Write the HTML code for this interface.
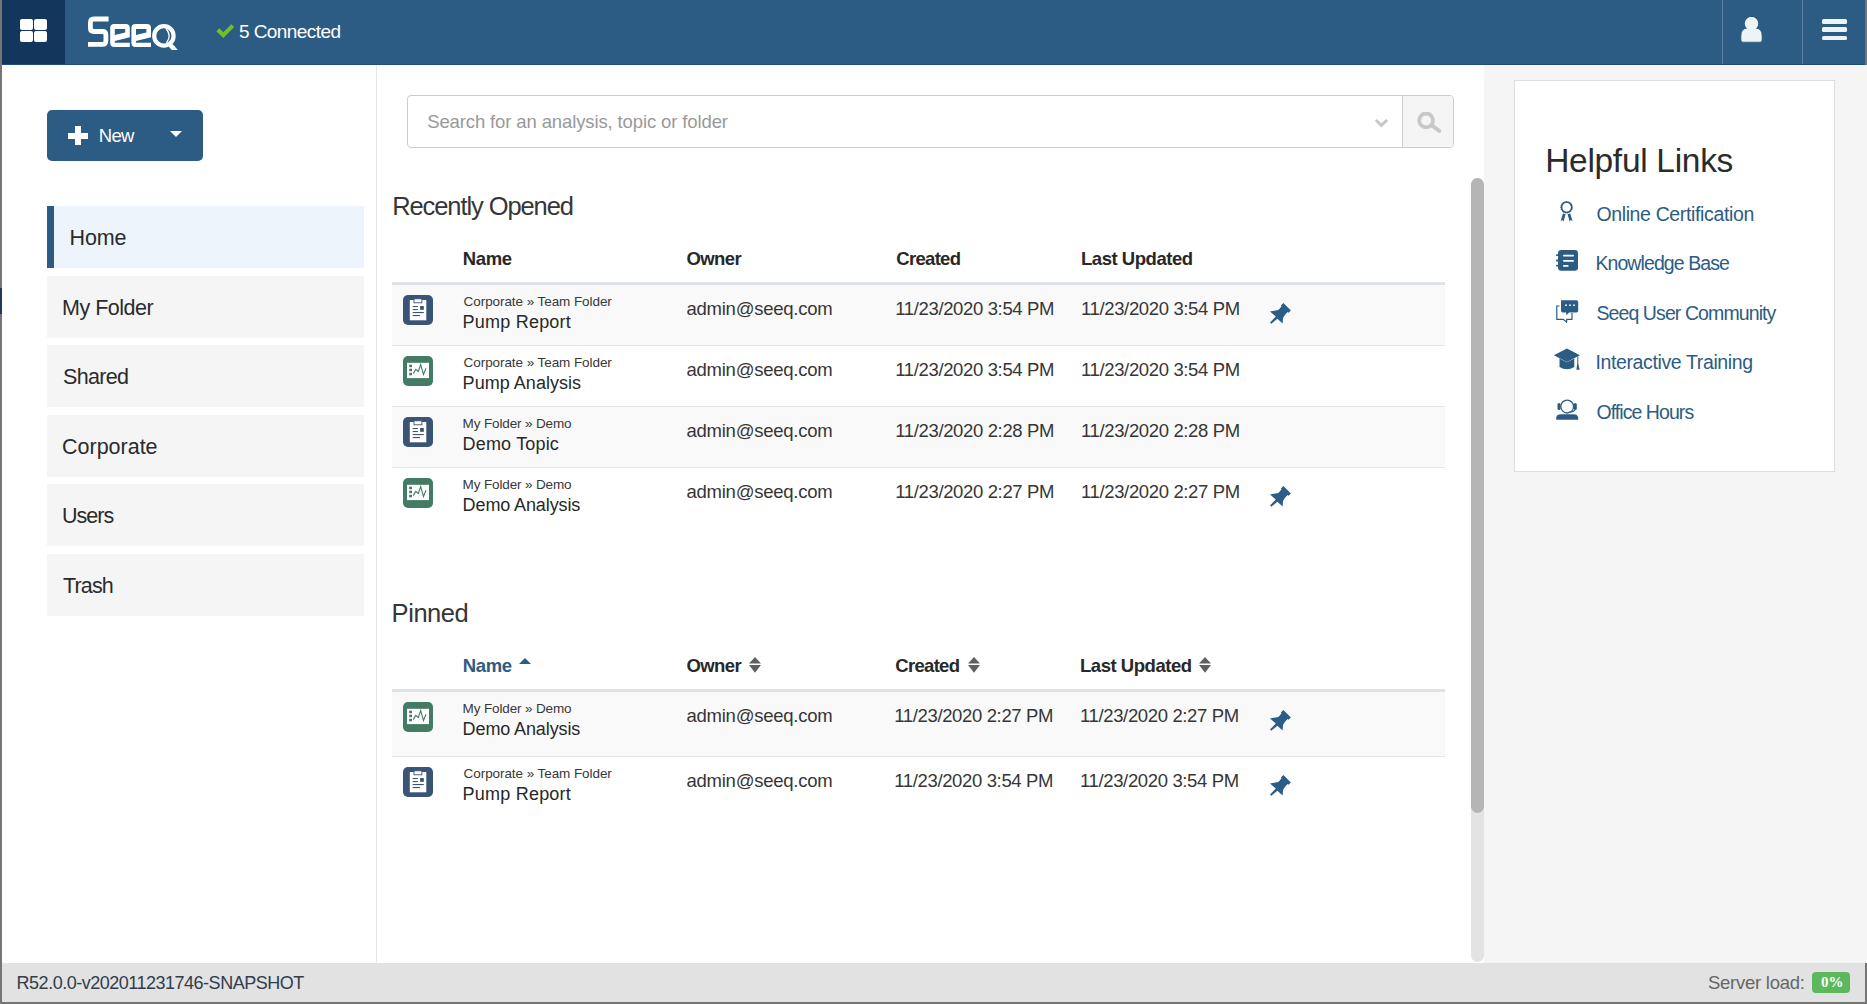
<!DOCTYPE html>
<html><head><meta charset="utf-8"><title>Seeq</title>
<style>
html,body{margin:0;padding:0;}
body{width:1867px;height:1004px;position:relative;overflow:hidden;background:#767676;font-family:"Liberation Sans",sans-serif;}
.t{position:absolute;white-space:nowrap;line-height:1;}
</style></head><body>
<div style="position:absolute;left:2px;top:0;width:1863px;height:64px;background:#2c5c84;border-bottom:1px solid #1f4e78"></div>
<div style="position:absolute;left:2px;top:0;width:63px;height:64px;background:#13375c"></div>
<div style="position:absolute;left:20px;top:19px;width:13px;height:11px;background:#fff;border-radius:2px"></div>
<div style="position:absolute;left:34px;top:19px;width:13px;height:11px;background:#fff;border-radius:2px"></div>
<div style="position:absolute;left:20px;top:31px;width:13px;height:11px;background:#fff;border-radius:2px"></div>
<div style="position:absolute;left:34px;top:31px;width:13px;height:11px;background:#fff;border-radius:2px"></div>
<svg style="position:absolute;left:84px;top:12px" width="100" height="42" viewBox="0 0 100 42">
<path d="M24.6 7 H10 Q6.4 7 6.4 10.6 V16 Q6.4 19.5 10 19.5 H18.4 Q21.9 19.5 21.9 23 V28.8 Q21.9 32.4 18.4 32.4 H4" fill="none" stroke="#fff" stroke-width="4.8"/>
<path fill="#fff" fill-rule="evenodd" d="M30.2 12 H41.8 Q45.8 12 45.8 16 V25.2 L30.8 28.9 V30.8 H45.8 V35.1 H30.2 Q26.2 35.1 26.2 31.1 V16 Q26.2 12 30.2 12 Z M30.8 17 H41.2 V20.6 L30.8 23 Z"/>
<path fill="#fff" fill-rule="evenodd" transform="translate(21.2 0)" d="M30.2 12 H41.8 Q45.8 12 45.8 16 V25.2 L30.8 28.9 V30.8 H45.8 V35.1 H30.2 Q26.2 35.1 26.2 31.1 V16 Q26.2 12 30.2 12 Z M30.8 17 H41.2 V20.6 L30.8 23 Z"/>
<circle cx="79.9" cy="23.9" r="9.7" fill="none" stroke="#fff" stroke-width="4.2"/>
<path d="M82 16.5 Q88 23.5 82.5 31" fill="none" stroke="#fff" stroke-width="1.3"/>
<path fill="#fff" d="M84.3 34.2 L88.6 32 L93.8 38 L87.8 38 Z"/>
</svg>
<svg style="position:absolute;left:0;top:0" width="240" height="45"><path fill="#72c02c" d="M216.4 31.2 L219.4 28.3 L223.3 32.2 L231.3 24.2 L234.2 27.1 L223.3 38 Z"/></svg>
<div class="t" style="left:239.00px;top:22px;font-size:19px;color:#fff;letter-spacing:-0.568px;">5 Connected</div>
<div style="position:absolute;left:1722px;top:0;width:1px;height:64px;background:#5a7fa0"></div>
<div style="position:absolute;left:1802px;top:0;width:1px;height:64px;background:#5a7fa0"></div>
<svg style="position:absolute;left:1735px;top:10px" width="35" height="40" viewBox="1735 10 35 40"><circle cx="1751.5" cy="23.6" r="6.6" fill="#eef4f6"/><path fill="#eef4f6" stroke="#2c5c84" stroke-width="0.8" d="M1743 42.2 Q1740.9 42.2 1740.9 40 V36 Q1740.9 28.6 1746.8 28.2 Q1751.5 30.8 1756.2 28.2 Q1762.1 28.6 1762.1 36 V40 Q1762.1 42.2 1760 42.2 Z"/><circle cx="1751.5" cy="23.6" r="6.6" fill="#eef4f6"/></svg>
<div style="position:absolute;left:1822px;top:19px;width:25px;height:4.6px;background:#eef4f6;border-radius:1.5px"></div>
<div style="position:absolute;left:1822px;top:27px;width:25px;height:4.6px;background:#eef4f6;border-radius:1.5px"></div>
<div style="position:absolute;left:1822px;top:35.5px;width:25px;height:4.6px;background:#eef4f6;border-radius:1.5px"></div>
<div style="position:absolute;left:0;top:288px;width:2px;height:26px;background:#1f3a52"></div>
<div style="position:absolute;left:2px;top:65px;width:1482px;height:898px;background:#fff"></div>
<div style="position:absolute;left:376px;top:65px;width:1px;height:898px;background:#e6e6e6"></div>
<div style="position:absolute;left:1484px;top:65px;width:1381px;height:898px;background:#f5f5f5"></div>
<div style="position:absolute;left:2px;top:963px;width:1863px;height:39px;background:#e2e2e2"></div>
<div class="t" style="left:16.60px;top:974px;font-size:18px;color:#2f3d4c;letter-spacing:-0.491px;">R52.0.0-v202011231746-SNAPSHOT</div>
<div class="t" style="left:1708.00px;top:974px;font-size:18.5px;color:#666;letter-spacing:-0.255px;">Server load:</div>
<div style="position:absolute;left:1812px;top:972px;width:38px;height:21px;background:#5cb85c;border-radius:4px"></div>
<div class="t" style="left:1821px;top:975px;font-size:15px;font-family:'Liberation Serif',serif;font-weight:700;color:#fff">0%</div>
<div style="position:absolute;left:47px;top:110px;width:156px;height:51px;background:#2c5c84;border-radius:5px"></div>
<div style="position:absolute;left:67.5px;top:132.5px;width:20px;height:6px;background:#fff"></div>
<div style="position:absolute;left:74.5px;top:126px;width:6.3px;height:19px;background:#fff"></div>
<div class="t" style="left:98.80px;top:127px;font-size:18.5px;color:#fff;letter-spacing:-0.724px;">New</div>
<svg style="position:absolute;left:170px;top:131px" width="12" height="6"><path d="M0 0 H12 L6 6 Z" fill="#fff"/></svg>
<div style="position:absolute;left:47px;top:206px;width:317px;height:62px;background:#edf4fb"></div>
<div style="position:absolute;left:47px;top:206px;width:7px;height:62px;background:#2c5c84"></div>
<div class="t" style="left:69.60px;top:228px;font-size:21.5px;color:#2b2b2b;letter-spacing:-0.131px;">Home</div>
<div style="position:absolute;left:47px;top:276px;width:317px;height:62px;background:#f5f5f5"></div>
<div class="t" style="left:62.00px;top:298px;font-size:21.5px;color:#2b2b2b;letter-spacing:-0.489px;">My Folder</div>
<div style="position:absolute;left:47px;top:345px;width:317px;height:62px;background:#f5f5f5"></div>
<div class="t" style="left:63.00px;top:367px;font-size:21.5px;color:#2b2b2b;letter-spacing:-0.674px;">Shared</div>
<div style="position:absolute;left:47px;top:415px;width:317px;height:62px;background:#f5f5f5"></div>
<div class="t" style="left:62.00px;top:437px;font-size:21.5px;color:#2b2b2b;letter-spacing:-0.006px;">Corporate</div>
<div style="position:absolute;left:47px;top:484px;width:317px;height:62px;background:#f5f5f5"></div>
<div class="t" style="left:62.00px;top:506px;font-size:21.5px;color:#2b2b2b;letter-spacing:-0.973px;">Users</div>
<div style="position:absolute;left:47px;top:554px;width:317px;height:62px;background:#f5f5f5"></div>
<div class="t" style="left:63.00px;top:576px;font-size:21.5px;color:#2b2b2b;letter-spacing:-0.851px;">Trash</div>
<div style="position:absolute;left:407px;top:95px;width:1045px;height:51px;border:1px solid #cccccc;border-radius:4px;background:#fff"></div>
<div style="position:absolute;left:1403px;top:96px;width:50px;height:51px;background:#f5f5f5;border-radius:0 3px 3px 0"></div>
<div style="position:absolute;left:1402px;top:96px;width:1px;height:51px;background:#cccccc"></div>
<div class="t" style="left:427.20px;top:113px;font-size:18.5px;color:#999;letter-spacing:-0.122px;">Search for an analysis, topic or folder</div>
<svg style="position:absolute;left:1370px;top:112px" width="80" height="24" viewBox="1370 112 80 24"><path d="M1375.8 120 L1381.4 125.4 L1387.1 120" fill="none" stroke="#c8c8c8" stroke-width="3"/><circle cx="1426.1" cy="120.4" r="6.9" fill="none" stroke="#c8c8c8" stroke-width="3.8"/><path d="M1432.5 125.8 L1439.3 130.9" stroke="#c8c8c8" stroke-width="4" stroke-linecap="round"/></svg>
<div style="position:absolute;left:1471px;top:178px;width:13px;height:784px;background:#e3e3e3;border-radius:6.5px"></div>
<div style="position:absolute;left:1471px;top:178px;width:13px;height:635px;background:#b5b5b5;border-radius:6.5px"></div>
<div class="t" style="left:392.20px;top:194px;font-size:25.5px;color:#363636;letter-spacing:-1.090px;">Recently Opened</div>
<div class="t" style="left:462.80px;top:250px;font-size:18.5px;color:#282828;font-weight:700;letter-spacing:-0.366px;">Name</div>
<div class="t" style="left:686.50px;top:250px;font-size:18.5px;color:#282828;font-weight:700;letter-spacing:-0.592px;">Owner</div>
<div class="t" style="left:896.30px;top:250px;font-size:18.5px;color:#282828;font-weight:700;letter-spacing:-0.698px;">Created</div>
<div class="t" style="left:1081.00px;top:250px;font-size:18.5px;color:#282828;font-weight:700;letter-spacing:-0.462px;">Last Updated</div>
<div style="position:absolute;left:392px;top:282px;width:1053px;height:3px;background:#dfe3e8"></div>
<div style="position:absolute;left:392px;top:285px;width:1053px;height:60px;background:#f9f9f9"></div>
<div style="position:absolute;left:392px;top:345px;width:1053px;height:1px;background:#e3e6ea"></div>
<svg style="position:absolute;left:403px;top:295px" width="30" height="30" viewBox="0 0 30 30"><rect x="0" y="0" width="30" height="30" rx="5" fill="#3a5475"/><rect x="6.8" y="5" width="16.5" height="20.3" fill="#fff"/><rect x="11" y="3.8" width="7.9" height="4" fill="#fff" stroke="#3a5475" stroke-width="0.9"/><g fill="#3a5475"><rect x="9.7" y="11" width="5.2" height="1.1"/><rect x="9.7" y="14" width="5.2" height="1.1"/><rect x="9.7" y="17" width="11.1" height="1.1"/><rect x="9.7" y="20" width="7.3" height="1.1"/><rect x="17.1" y="11" width="3.7" height="3.8"/></g></svg>
<div class="t" style="left:463.60px;top:295px;font-size:13.5px;color:#383838;letter-spacing:-0.072px;">Corporate &raquo; Team Folder</div>
<div class="t" style="left:462.60px;top:313px;font-size:18px;color:#282828;letter-spacing:0.215px;">Pump Report</div>
<div class="t" style="left:686.50px;top:300px;font-size:18.5px;color:#363636;letter-spacing:-0.251px;">admin@seeq.com</div>
<div class="t" style="left:895.30px;top:300px;font-size:18.5px;color:#363636;letter-spacing:-0.361px;">11/23/2020 3:54 PM</div>
<div class="t" style="left:1081.00px;top:300px;font-size:18.5px;color:#363636;letter-spacing:-0.361px;">11/23/2020 3:54 PM</div>
<svg style="position:absolute;left:1264px;top:298px" width="32" height="32" viewBox="0 0 32 32"><path fill="#2b5d89" d="M6 13.4 L14.3 12.1 Q16 10.5 17.5 8.3 L16.9 7.5 L19.4 5.1 L26.9 12.6 L24.5 14.8 L23.6 14 Q21.5 16 20.4 17.8 L19.1 19.8 L18.6 25.5 L13.4 20.7 L7.3 25.8 L6 24.5 L11.8 18.5 Z"/></svg>
<div style="position:absolute;left:392px;top:346px;width:1053px;height:60px;background:#fff"></div>
<div style="position:absolute;left:392px;top:406px;width:1053px;height:1px;background:#e3e6ea"></div>
<svg style="position:absolute;left:403px;top:356px" width="30" height="30" viewBox="0 0 30 30"><rect x="0" y="0" width="30" height="30" rx="5" fill="#437c63"/><rect x="4" y="6.8" width="22" height="15.3" fill="#fff"/><g fill="#437c63"><rect x="6.2" y="8.7" width="2.8" height="2.5"/><rect x="6.2" y="12.7" width="2.8" height="2.5"/><rect x="6.2" y="16.8" width="2.8" height="2.5"/></g><path d="M10.2 17.6 L12.8 13.4 L15.3 15.5 L17.7 8.5 L20.5 18.5 L23 12.3" fill="none" stroke="#437c63" stroke-width="1.1"/></svg>
<div class="t" style="left:463.60px;top:356px;font-size:13.5px;color:#383838;letter-spacing:-0.072px;">Corporate &raquo; Team Folder</div>
<div class="t" style="left:462.60px;top:374px;font-size:18px;color:#282828;letter-spacing:0.038px;">Pump Analysis</div>
<div class="t" style="left:686.50px;top:361px;font-size:18.5px;color:#363636;letter-spacing:-0.251px;">admin@seeq.com</div>
<div class="t" style="left:895.30px;top:361px;font-size:18.5px;color:#363636;letter-spacing:-0.361px;">11/23/2020 3:54 PM</div>
<div class="t" style="left:1081.00px;top:361px;font-size:18.5px;color:#363636;letter-spacing:-0.361px;">11/23/2020 3:54 PM</div>
<div style="position:absolute;left:392px;top:407px;width:1053px;height:60px;background:#f9f9f9"></div>
<div style="position:absolute;left:392px;top:467px;width:1053px;height:1px;background:#e3e6ea"></div>
<svg style="position:absolute;left:403px;top:417px" width="30" height="30" viewBox="0 0 30 30"><rect x="0" y="0" width="30" height="30" rx="5" fill="#3a5475"/><rect x="6.8" y="5" width="16.5" height="20.3" fill="#fff"/><rect x="11" y="3.8" width="7.9" height="4" fill="#fff" stroke="#3a5475" stroke-width="0.9"/><g fill="#3a5475"><rect x="9.7" y="11" width="5.2" height="1.1"/><rect x="9.7" y="14" width="5.2" height="1.1"/><rect x="9.7" y="17" width="11.1" height="1.1"/><rect x="9.7" y="20" width="7.3" height="1.1"/><rect x="17.1" y="11" width="3.7" height="3.8"/></g></svg>
<div class="t" style="left:462.60px;top:417px;font-size:13.5px;color:#383838;letter-spacing:-0.135px;">My Folder &raquo; Demo</div>
<div class="t" style="left:462.60px;top:435px;font-size:18px;color:#282828;letter-spacing:0.174px;">Demo Topic</div>
<div class="t" style="left:686.50px;top:422px;font-size:18.5px;color:#363636;letter-spacing:-0.251px;">admin@seeq.com</div>
<div class="t" style="left:895.30px;top:422px;font-size:18.5px;color:#363636;letter-spacing:-0.361px;">11/23/2020 2:28 PM</div>
<div class="t" style="left:1081.00px;top:422px;font-size:18.5px;color:#363636;letter-spacing:-0.361px;">11/23/2020 2:28 PM</div>
<div style="position:absolute;left:392px;top:468px;width:1053px;height:60px;background:#fff"></div>
<svg style="position:absolute;left:403px;top:478px" width="30" height="30" viewBox="0 0 30 30"><rect x="0" y="0" width="30" height="30" rx="5" fill="#437c63"/><rect x="4" y="6.8" width="22" height="15.3" fill="#fff"/><g fill="#437c63"><rect x="6.2" y="8.7" width="2.8" height="2.5"/><rect x="6.2" y="12.7" width="2.8" height="2.5"/><rect x="6.2" y="16.8" width="2.8" height="2.5"/></g><path d="M10.2 17.6 L12.8 13.4 L15.3 15.5 L17.7 8.5 L20.5 18.5 L23 12.3" fill="none" stroke="#437c63" stroke-width="1.1"/></svg>
<div class="t" style="left:462.60px;top:478px;font-size:13.5px;color:#383838;letter-spacing:-0.135px;">My Folder &raquo; Demo</div>
<div class="t" style="left:462.60px;top:496px;font-size:18px;color:#282828;letter-spacing:-0.112px;">Demo Analysis</div>
<div class="t" style="left:686.50px;top:483px;font-size:18.5px;color:#363636;letter-spacing:-0.251px;">admin@seeq.com</div>
<div class="t" style="left:895.30px;top:483px;font-size:18.5px;color:#363636;letter-spacing:-0.361px;">11/23/2020 2:27 PM</div>
<div class="t" style="left:1081.00px;top:483px;font-size:18.5px;color:#363636;letter-spacing:-0.361px;">11/23/2020 2:27 PM</div>
<svg style="position:absolute;left:1264px;top:481px" width="32" height="32" viewBox="0 0 32 32"><path fill="#2b5d89" d="M6 13.4 L14.3 12.1 Q16 10.5 17.5 8.3 L16.9 7.5 L19.4 5.1 L26.9 12.6 L24.5 14.8 L23.6 14 Q21.5 16 20.4 17.8 L19.1 19.8 L18.6 25.5 L13.4 20.7 L7.3 25.8 L6 24.5 L11.8 18.5 Z"/></svg>
<div class="t" style="left:391.60px;top:601px;font-size:25.5px;color:#363636;letter-spacing:-0.444px;">Pinned</div>
<div class="t" style="left:462.80px;top:657px;font-size:18.5px;color:#2c5c84;font-weight:700;letter-spacing:-0.366px;">Name</div>
<div class="t" style="left:686.50px;top:657px;font-size:18.5px;color:#282828;font-weight:700;letter-spacing:-0.592px;">Owner</div>
<div class="t" style="left:895.30px;top:657px;font-size:18.5px;color:#282828;font-weight:700;letter-spacing:-0.698px;">Created</div>
<div class="t" style="left:1080.00px;top:657px;font-size:18.5px;color:#282828;font-weight:700;letter-spacing:-0.462px;">Last Updated</div>
<svg style="position:absolute;left:519px;top:657.5px" width="12" height="6"><path d="M0 6 H12 L6 0 Z" fill="#2c5c84"/></svg>
<svg style="position:absolute;left:748.6px;top:657px" width="12" height="16"><path d="M0 6.5 H12 L6 0 Z M0 8 H12 L6 15.8 Z" fill="#606060"/></svg>
<svg style="position:absolute;left:967.6px;top:657px" width="12" height="16"><path d="M0 6.5 H12 L6 0 Z M0 8 H12 L6 15.8 Z" fill="#606060"/></svg>
<svg style="position:absolute;left:1199px;top:657px" width="12" height="16"><path d="M0 6.5 H12 L6 0 Z M0 8 H12 L6 15.8 Z" fill="#606060"/></svg>
<div style="position:absolute;left:392px;top:689px;width:1053px;height:3px;background:#dfe3e8"></div>
<div style="position:absolute;left:392px;top:692px;width:1053px;height:64px;background:#f9f9f9"></div>
<div style="position:absolute;left:392px;top:756px;width:1053px;height:1px;background:#e3e6ea"></div>
<svg style="position:absolute;left:403px;top:702px" width="30" height="30" viewBox="0 0 30 30"><rect x="0" y="0" width="30" height="30" rx="5" fill="#437c63"/><rect x="4" y="6.8" width="22" height="15.3" fill="#fff"/><g fill="#437c63"><rect x="6.2" y="8.7" width="2.8" height="2.5"/><rect x="6.2" y="12.7" width="2.8" height="2.5"/><rect x="6.2" y="16.8" width="2.8" height="2.5"/></g><path d="M10.2 17.6 L12.8 13.4 L15.3 15.5 L17.7 8.5 L20.5 18.5 L23 12.3" fill="none" stroke="#437c63" stroke-width="1.1"/></svg>
<div class="t" style="left:462.60px;top:702px;font-size:13.5px;color:#383838;letter-spacing:-0.135px;">My Folder &raquo; Demo</div>
<div class="t" style="left:462.60px;top:720px;font-size:18px;color:#282828;letter-spacing:-0.112px;">Demo Analysis</div>
<div class="t" style="left:686.50px;top:707px;font-size:18.5px;color:#363636;letter-spacing:-0.251px;">admin@seeq.com</div>
<div class="t" style="left:894.30px;top:707px;font-size:18.5px;color:#363636;letter-spacing:-0.361px;">11/23/2020 2:27 PM</div>
<div class="t" style="left:1080.00px;top:707px;font-size:18.5px;color:#363636;letter-spacing:-0.361px;">11/23/2020 2:27 PM</div>
<svg style="position:absolute;left:1264px;top:705px" width="32" height="32" viewBox="0 0 32 32"><path fill="#2b5d89" d="M6 13.4 L14.3 12.1 Q16 10.5 17.5 8.3 L16.9 7.5 L19.4 5.1 L26.9 12.6 L24.5 14.8 L23.6 14 Q21.5 16 20.4 17.8 L19.1 19.8 L18.6 25.5 L13.4 20.7 L7.3 25.8 L6 24.5 L11.8 18.5 Z"/></svg>
<div style="position:absolute;left:392px;top:757px;width:1053px;height:64px;background:#fff"></div>
<svg style="position:absolute;left:403px;top:767px" width="30" height="30" viewBox="0 0 30 30"><rect x="0" y="0" width="30" height="30" rx="5" fill="#3a5475"/><rect x="6.8" y="5" width="16.5" height="20.3" fill="#fff"/><rect x="11" y="3.8" width="7.9" height="4" fill="#fff" stroke="#3a5475" stroke-width="0.9"/><g fill="#3a5475"><rect x="9.7" y="11" width="5.2" height="1.1"/><rect x="9.7" y="14" width="5.2" height="1.1"/><rect x="9.7" y="17" width="11.1" height="1.1"/><rect x="9.7" y="20" width="7.3" height="1.1"/><rect x="17.1" y="11" width="3.7" height="3.8"/></g></svg>
<div class="t" style="left:463.60px;top:767px;font-size:13.5px;color:#383838;letter-spacing:-0.072px;">Corporate &raquo; Team Folder</div>
<div class="t" style="left:462.60px;top:785px;font-size:18px;color:#282828;letter-spacing:0.215px;">Pump Report</div>
<div class="t" style="left:686.50px;top:772px;font-size:18.5px;color:#363636;letter-spacing:-0.251px;">admin@seeq.com</div>
<div class="t" style="left:894.30px;top:772px;font-size:18.5px;color:#363636;letter-spacing:-0.361px;">11/23/2020 3:54 PM</div>
<div class="t" style="left:1080.00px;top:772px;font-size:18.5px;color:#363636;letter-spacing:-0.361px;">11/23/2020 3:54 PM</div>
<svg style="position:absolute;left:1264px;top:770px" width="32" height="32" viewBox="0 0 32 32"><path fill="#2b5d89" d="M6 13.4 L14.3 12.1 Q16 10.5 17.5 8.3 L16.9 7.5 L19.4 5.1 L26.9 12.6 L24.5 14.8 L23.6 14 Q21.5 16 20.4 17.8 L19.1 19.8 L18.6 25.5 L13.4 20.7 L7.3 25.8 L6 24.5 L11.8 18.5 Z"/></svg>
<div style="position:absolute;left:1514px;top:80px;width:319px;height:390px;background:#fff;border:1px solid #dddddd"></div>
<div class="t" style="left:1545.20px;top:144px;font-size:33.5px;color:#2b2b2b;letter-spacing:-0.303px;">Helpful Links</div>
<div class="t" style="left:1596.40px;top:205px;font-size:19.5px;color:#2c5c84;letter-spacing:-0.363px;">Online Certification</div>
<div class="t" style="left:1595.40px;top:254px;font-size:19.5px;color:#2c5c84;letter-spacing:-0.908px;">Knowledge Base</div>
<div class="t" style="left:1596.40px;top:304px;font-size:19.5px;color:#2c5c84;letter-spacing:-0.900px;">Seeq User Community</div>
<div class="t" style="left:1595.40px;top:353px;font-size:19.5px;color:#2c5c84;letter-spacing:-0.371px;">Interactive Training</div>
<div class="t" style="left:1596.40px;top:403px;font-size:19.5px;color:#2c5c84;letter-spacing:-0.933px;">Office Hours</div>
<svg style="position:absolute;left:1550px;top:195px" width="40" height="235" viewBox="1550 195 40 235">
<g fill="#2c5c84" stroke="none">
<circle cx="1566.6" cy="207.3" r="5.3" fill="none" stroke="#2c5c84" stroke-width="1.9" stroke-dasharray="1.2 0.5"/>
<circle cx="1566.6" cy="207.3" r="5.1" fill="none" stroke="#2c5c84" stroke-width="1.3"/>
<path d="M1563 213.6 L1565.6 214.2 L1563.6 221.4 L1562.5 220 L1560.6 221 Z"/>
<path d="M1570.2 213.6 L1567.6 214.2 L1569.6 221.4 L1570.7 220 L1572.6 221 Z"/>
<rect x="1558" y="250.1" width="20" height="20.7" rx="3.2"/>
<rect x="1556" y="254.3" width="3.5" height="1.8" rx="0.9"/><rect x="1556" y="259.6" width="3.5" height="1.8" rx="0.9"/><rect x="1556" y="264.8" width="3.5" height="1.8" rx="0.9"/>
<path d="M1561 300.2 H1576.4 Q1578.2 300.2 1578.2 302 V310.8 Q1578.2 312.6 1576.4 312.6 H1569 L1566.5 315.3 L1566 312.6 H1562.8 Q1561 312.6 1561 310.8 Z"/>
<path d="M1559.5 306 H1556.8 V319.4 H1563.3 L1566.5 322 L1566.8 319.4 H1572 V313" fill="none" stroke="#2c5c84" stroke-width="1.2"/>
<path d="M1553.8 355.2 L1566.9 348.4 L1580 355.2 L1566.9 362 Z"/>
<path d="M1559.5 358.5 L1566.9 362.3 L1574.3 358.5 V367 Q1566.9 371.5 1559.5 367 Z"/>
<path d="M1577.3 356.5 H1578.3 V363.5 L1579.6 369.8 H1576.4 L1577.3 363.5 Z"/>
<circle cx="1567.2" cy="406.6" r="6.4" fill="none" stroke="#2c5c84" stroke-width="1.3"/>
<rect x="1557.5" y="403" width="3" height="7" rx="1.5"/><rect x="1573.8" y="403" width="3" height="7" rx="1.5"/>
<path d="M1556.2 419.8 V418 Q1556.2 414.2 1561 414.2 H1573.4 Q1578.2 414.2 1578.2 418 V419.8 Z"/>
<path d="M1575.2 409.5 Q1574 412 1568.5 412.2" fill="none" stroke="#2c5c84" stroke-width="1.2"/>
</g>
<g fill="#fff"><rect x="1563" y="254.7" width="11" height="1.8" rx="0.9"/><rect x="1563" y="259.9" width="11" height="1.8" rx="0.9"/><rect x="1563" y="265" width="5.6" height="1.8" rx="0.9"/>
<circle cx="1566" cy="305.2" r="0.9"/><circle cx="1570" cy="305.2" r="0.9"/><circle cx="1574" cy="305.2" r="0.9"/></g>
</svg>
</body></html>
